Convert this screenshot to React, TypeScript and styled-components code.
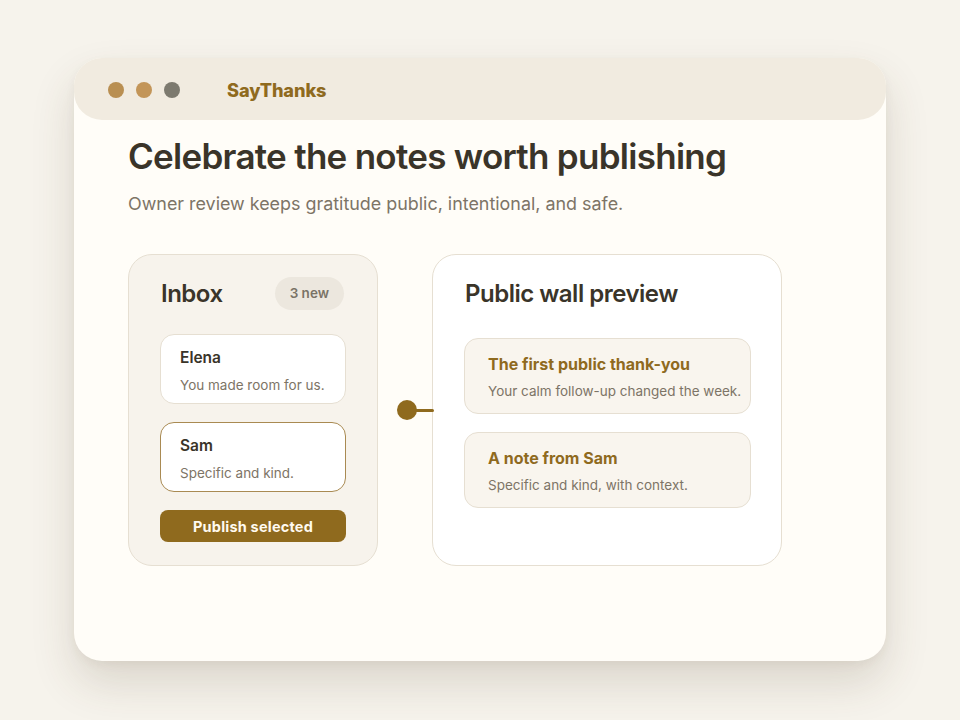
import React from "react";
import styled, { createGlobalStyle } from "styled-components";

const Global = createGlobalStyle`
  html, body { margin: 0; padding: 0; }
  body {
    background: #f6f3ec;
    font-family: Inter, "Noto Sans", sans-serif;
    -webkit-font-smoothing: antialiased;
  }
`;

const Page = styled.div`
  width: 960px;
  height: 720px;
  display: flex;
  justify-content: center;
  padding-top: 58px;
  box-sizing: border-box;
`;

const Window = styled.div`
  width: 812px;
  height: 603px;
  background: #fffdf8;
  border-radius: 28px;
  box-shadow: 0 22px 44px rgba(80, 62, 35, 0.16), 0 4px 10px rgba(80, 62, 35, 0.05);
  display: flex;
  flex-direction: column;
`;

const TitleBar = styled.div`
  height: 62px;
  box-sizing: border-box;
  padding: 2px 0 0 34px;
  background: #f1ebe0;
  border-radius: 28px;
  display: flex;
  align-items: center;
  gap: 12px;
`;

const Dot = styled.span<{ $c: string }>`
  width: 16px;
  height: 16px;
  border-radius: 50%;
  background: ${(p) => p.$c};
`;

const Brand = styled.span`
  margin-left: 35px;
  font-size: 18.2px;
  font-weight: 800;
  color: #8f6a1e;
  letter-spacing: -0.1px;
`;

const Content = styled.div`
  padding: 12px 0 0 54px;
  display: flex;
  flex-direction: column;
`;

const Heading = styled.h1`
  margin: 0;
  font-size: 35px;
  line-height: 48px;
  font-weight: 600;
  color: #3a3429;
  letter-spacing: -0.72px;
`;

const Sub = styled.p`
  margin: 12px 0 0;
  font-size: 17.9px;
  line-height: 24px;
  color: #7d7466;
`;

const Row = styled.div`
  margin-top: 38px;
  display: flex;
  align-items: stretch;
`;

const Panel = styled.div<{ $white?: boolean; $w: number; $pl: number; $pr: number }>`
  width: ${(p) => p.$w}px;
  height: 312px;
  box-sizing: border-box;
  border-radius: 24px;
  border: 1px solid #e6dfd2;
  background: ${(p) => (p.$white ? "#ffffff" : "#f7f3ec")};
  padding: 21px ${(p) => p.$pr}px 0 ${(p) => p.$pl}px;
  display: flex;
  flex-direction: column;
`;

const PanelHead = styled.div`
  display: flex;
  align-items: center;
  justify-content: space-between;
  height: 34px;
  padding-left: 1px;
`;

const PanelTitle = styled.h2`
  margin: 0;
  font-size: 24px;
  font-weight: 600;
  color: #3a3429;
  letter-spacing: -0.5px;
`;

const Pill = styled.span`
  background: #ece7de;
  color: #7a7366;
  font-size: 13.5px;
  font-weight: 600;
  height: 33px;
  padding: 0 15px;
  margin-right: 2px;
  border-radius: 17px;
  display: flex;
  align-items: center;
`;

const List = styled.div<{ $top: number; $gap: number }>`
  margin-top: ${(p) => p.$top}px;
  display: flex;
  flex-direction: column;
  gap: ${(p) => p.$gap}px;
`;

const Card = styled.div<{ $selected?: boolean; $tint?: boolean; $h: number }>`
  height: ${(p) => p.$h}px;
  box-sizing: border-box;
  border-radius: 14px;
  border: 1px solid ${(p) => (p.$selected ? "#a98a52" : "#e6dfd2")};
  background: ${(p) => (p.$tint ? "#f9f5ee" : "#ffffff")};
  padding: ${(p) => (p.$tint ? 15 : 13)}px 0 0 ${(p) => (p.$tint ? 23 : 19)}px;
  display: flex;
  flex-direction: column;
  gap: 7px;
`;

const Name = styled.div<{ $gold?: boolean }>`
  font-size: ${(p) => (p.$gold ? 16 : 15.5)}px;
  font-weight: ${(p) => (p.$gold ? 700 : 600)};
  color: ${(p) => (p.$gold ? "#8f6a1e" : "#3a3429")};
  line-height: 20px;
  white-space: nowrap;
`;

const Note = styled.div`
  font-size: 13.5px;
  color: #7d7466;
  line-height: 20px;
  white-space: nowrap;
`;

const Button = styled.button`
  margin-top: 18px;
  height: 32px;
  border: none;
  border-radius: 8px;
  background: #8f6a1e;
  color: #fffaf0;
  font-family: Inter, sans-serif;
  font-size: 14.5px;
  font-weight: 700;
  letter-spacing: 0.2px;
  cursor: pointer;
`;

const Connector = styled.div`
  width: 54px;
  display: flex;
  align-items: center;
  padding-left: 19px;
  box-sizing: border-box;
  position: relative;
  z-index: 1;
`;

const Knob = styled.span`
  width: 20px;
  height: 20px;
  border-radius: 50%;
  background: #8f6a1e;
  flex: none;
`;

const Stem = styled.span`
  width: 19px;
  height: 3px;
  border-radius: 2px;
  background: #8f6a1e;
  margin-left: -2px;
  flex: none;
`;

export default function App() {
  return (
    <>
      <Global />
      <Page>
        <Window>
          <TitleBar>
            <Dot $c="#b98f52" />
            <Dot $c="#c39558" />
            <Dot $c="#7d7a6f" />
            <Brand>SayThanks</Brand>
          </TitleBar>
          <Content>
            <Heading>Celebrate the notes worth publishing</Heading>
            <Sub>Owner review keeps gratitude public, intentional, and safe.</Sub>
            <Row>
              <Panel $w={250} $pl={31} $pr={31}>
                <PanelHead>
                  <PanelTitle>Inbox</PanelTitle>
                  <Pill>3 new</Pill>
                </PanelHead>
                <List $top={24} $gap={18}>
                  <Card $h={70}>
                    <Name>Elena</Name>
                    <Note>You made room for us.</Note>
                  </Card>
                  <Card $h={70} $selected>
                    <Name>Sam</Name>
                    <Note>Specific and kind.</Note>
                  </Card>
                </List>
                <Button>Publish selected</Button>
              </Panel>
              <Connector>
                <Knob />
                <Stem />
              </Connector>
              <Panel $w={350} $white $pl={31} $pr={30}>
                <PanelHead>
                  <PanelTitle>Public wall preview</PanelTitle>
                </PanelHead>
                <List $top={28} $gap={18}>
                  <Card $h={76} $tint>
                    <Name $gold>The first public thank-you</Name>
                    <Note>Your calm follow-up changed the week.</Note>
                  </Card>
                  <Card $h={76} $tint>
                    <Name $gold>A note from Sam</Name>
                    <Note>Specific and kind, with context.</Note>
                  </Card>
                </List>
              </Panel>
            </Row>
          </Content>
        </Window>
      </Page>
    </>
  );
}
